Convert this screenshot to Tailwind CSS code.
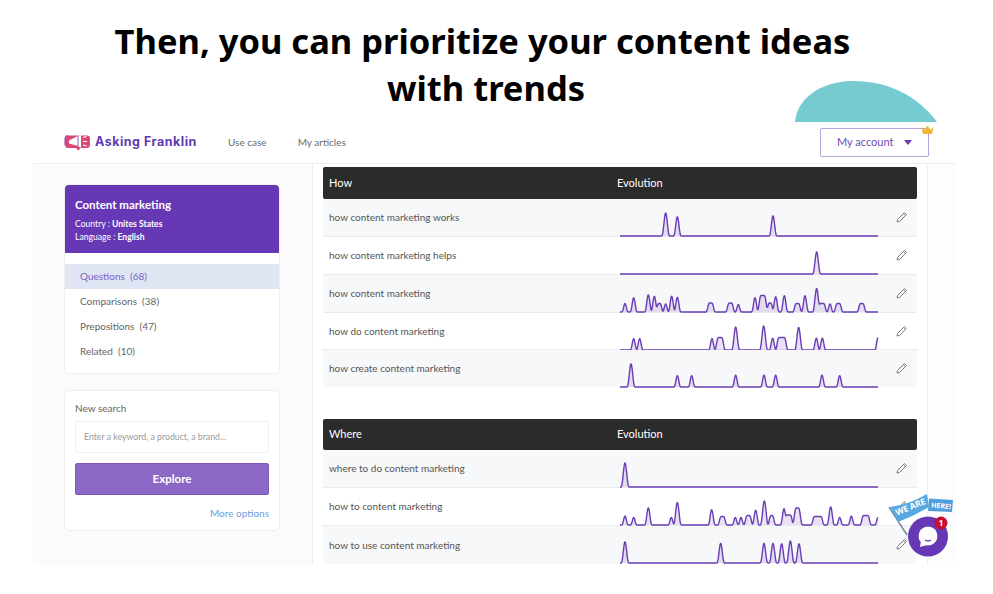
<!DOCTYPE html>
<html lang="en">
<head>
  <meta charset="UTF-8">
  <title>Asking Franklin</title>
  <script src="https://cdn.jsdelivr.net/npm/@tailwindcss/browser@4"></script>
</head>
<body class="bg-white font-['Lato',sans-serif]">
  <div class="relative w-[993px] h-[594px] overflow-hidden">
    <h1 class="w-[965px] h-[125px] pt-[17px] text-center text-[34.5px] leading-[47px] font-bold text-black font-['Noto_Sans',sans-serif]">Then, you can prioritize your content ideas<br><span class="inline-block pl-[7px]">with trends</span></h1>

    <svg class="absolute left-[795px] top-[81px]" width="142" height="41" viewBox="0 0 142 41"><path d="M0 41C2 16 28 0 58 0C92 0 122 14 142 41Z" fill="#75cbcf"/></svg>

    <div class="w-[923px] h-[440px] ml-[33px] flex flex-col">
      <header class="h-[39px] shrink-0 flex items-center border-b border-[#eeeeee] pl-[31px] relative">
        <svg width="27" height="17" viewBox="0 0 27 17" class="mb-[3px]">
          <path d="M4 1.500H23Q26 1.500 26 4.500V11Q26 14 23 14H17L14 16.500L12 14H4Q1 14 1 11V4.500Q1 1.500 4 1.500Z" fill="#dc4a74"/>
          <path d="M1 11V4.500Q1 1.500 4 1.500" stroke="#8a3fb0" stroke-width="1" fill="none"/>
          <path d="M5 6.500L14 2L17 0.500V14L14 12L5 9.500Z" fill="#fff"/>
          <path d="M14 2V12" stroke="#6a3db5" stroke-width="0.8"/>
          <path d="M19 3.500L22.500 2.500M19 7.500H23M19 11L22.500 12" stroke="#fff" stroke-width="1.200"/>
        </svg>
        <span class="ml-[4px] mb-[3px] w-[103px] text-[12.5px] font-bold tracking-[0.5px] whitespace-nowrap text-[#5f3ab0] font-['Inter',sans-serif]">Asking Franklin</span>
        <span class="ml-[30px] mb-[3px] text-[10px] text-[#6c6c6c]">Use case</span>
        <span class="ml-[31px] mb-[3px] text-[10px] text-[#6c6c6c]">My articles</span>
        <button class="absolute left-[787px] top-[3px] w-[109px] h-[29px] border border-[#b9a3dc] rounded-[2px] bg-white flex items-center text-[#6a4bb0] text-[11px] pl-[16px]">
          My account
          <svg class="ml-[11px]" width="8" height="5" viewBox="0 0 8 5"><path d="M0 0H8L4 5Z" fill="#6a3db5"/></svg>
        </button>
        <svg class="absolute left-[887px] top-0" width="15" height="10" viewBox="0 0 15 10"><path d="M1.500 2L4.500 5L7.500 0.500L10.500 5L13.500 2L12 9H3Z" fill="#f4b331"/></svg>
      </header>

      <div class="flex flex-1 min-h-0">
        <aside class="w-[280px] shrink-0 bg-[#fbfbfc] border-r border-[#eeeeee] pl-[31px] pt-[21px]">
          <div class="w-[216px] h-[190px] -mt-[1px] bg-white rounded-[5px] border border-[#efefef] overflow-hidden">
            <div class="h-[68px] bg-[#6638b5] px-[10px] pt-[11px] text-white">
              <div class="text-[11.5px] leading-[17px] font-bold">Content marketing</div>
              <div class="text-[8.6px] leading-[13px] mt-[5px]">Country : <b class="font-bold">Unites States</b></div>
              <div class="text-[8.6px] leading-[13px]">Language : <b class="font-bold">English</b></div>
            </div>
            <ul class="pt-[11px] text-[10px] text-[#666666]">
              <li class="h-[25px] leading-[25px] pl-[15px] bg-[#dfe5f2] text-[#7b5fc2]">Questions&nbsp; (68)</li>
              <li class="h-[25px] leading-[25px] pl-[15px]">Comparisons&nbsp; (38)</li>
              <li class="h-[25px] leading-[25px] pl-[15px]">Prepositions&nbsp; (47)</li>
              <li class="h-[25px] leading-[25px] pl-[15px]">Related&nbsp; (10)</li>
            </ul>
          </div>
          <div class="w-[216px] h-[141px] mt-[16px] bg-white rounded-[5px] border border-[#efefef] px-[10px] pt-[10px]">
            <div class="text-[10px] leading-[14px] text-[#666666]">New search</div>
            <div class="h-[32px] mt-[6px] border border-[#efefef] rounded-[2px] pl-[8px] flex items-center text-[8.75px] text-[#9a9a9a]">Enter a keyword, a product, a brand...</div>
            <button class="w-full h-[32px] mt-[10px] bg-[#8c68c6] border border-[#7d58ba] rounded-[2px] text-white text-[11.5px] font-bold">Explore</button>
            <div class="mt-[11px] text-right text-[10px] leading-[14px] text-[#6f9be0]">More options</div>
          </div>
        </aside>

        <main class="w-[615px] shrink-0 border-r border-[#f0f0f0] pl-[10px] pt-[3px] overflow-hidden">
          <div class="w-[594px]">
            <div class="h-[32px] bg-[#2b2b2b] rounded-[2px] flex items-center text-white text-[11px] pl-[6px]"><span class="w-[288px]">How</span><span>Evolution</span></div>
            <div data-row data-peaks="167,24 202,20 489,21" class="h-[38px] bg-[#f7f8fa] border-b border-[#ebebeb]">how content marketing works</div>
            <div data-row data-peaks="620,23" class="h-[38px] bg-white border-b border-[#ebebeb]">how content marketing helps</div>
            <div data-row data-peaks="45,9 71,15 115,18 133,16.5 148,8.5,1 167,8.5 185,16.5 202,15.5 302,9,1.5 361,9,1.5 385,8 435,15 458,16.5,2 480,9,1 497,16 523,17 562,8.5,1.5 585,17 620,24.5 636,8.5,2 660,8.5 685,8.5,1.5 755,8.5,1.5" class="h-[38px] bg-[#f7f8fa] border-b border-[#ebebeb]">how content marketing</div>
            <div data-row data-peaks="71,12 89,12 306,12 330,12.5,2 377,24 461,25 488,12.5 515,12.5,3 566,23.5 619,12.5 637,12.5 804,13" class="h-[37px] bg-white border-b border-[#ebebeb]">how do content marketing</div>
            <div data-row data-peaks="63,24 202,12 245,12 377,12.5 462,12.5 497,12.5 636,12.5 689,12" class="h-[37px] bg-[#f7f8fa]">how create content marketing</div>

            <div class="h-[31px] mt-[32px] bg-[#2b2b2b] rounded-[2px] flex items-center text-white text-[11px] pl-[6px]"><span class="w-[288px]">Where</span><span>Evolution</span></div>
            <div data-row data-peaks="45,25" class="h-[38px] bg-[#f7f8fa] border-b border-[#ebebeb]">where to do content marketing</div>
            <div data-row data-peaks="45,9.5 71,8 115,18 184,8 202,23.5 305,16 337,8.5,1.5 376,8 393,8 415,9.5,1.5 437,15.5 463,25 485,9.5,1 522,17 536,10,2 562,17,1.5 623,8.5,3.5 662,19 689,8 724,9.5 767,9.5,2.5 804,8" class="h-[38px] bg-white border-b border-[#ebebeb]">how to content marketing</div>
            <div data-row data-peaks="45,22 332,20.5 462,20.5 489,20.5 515,20 541,23 567,20" class="h-[38px] bg-[#f7f8fa]">how to use content marketing</div>
          </div>
        </main>
        <div class="flex-1 bg-[#fdfdfd]"></div>
      </div>
    </div>

    <svg class="absolute left-[886px] top-[492px]" width="72" height="68" viewBox="0 0 72 68">
      <path d="M3 15L21 43" stroke="#7d8a94" stroke-width="1.500"/>
      <path d="M43 6.500L67 8L66 20L42 19Z" fill="#4f9fdc"/>
      <path d="M4 15Q22 13 41 2L43 15Q28 24 12 30Z" fill="#58a9e3"/>
      <text x="11" y="23.500" transform="rotate(-22 11 23.500)" font-family="Noto Sans" font-size="8.500" font-weight="700" fill="#fff">WE ARE</text>
      <text x="45" y="15.500" transform="rotate(5 45 15.500)" font-family="Noto Sans" font-size="7" font-weight="700" fill="#fff">HERE!</text>
      <circle cx="42" cy="44.500" r="20" fill="#6638b5"/>
      <circle cx="42" cy="44" r="9.500" fill="#fff"/>
      <path d="M35 49L34 55L41 53Z" fill="#fff"/>
      <path d="M39 48Q42 50 45 48" stroke="#6638b5" stroke-width="1.400" fill="none"/>
      <circle cx="55" cy="31" r="6.500" fill="#c8102e"/>
      <text x="55" y="34" text-anchor="middle" font-family="Noto Sans" font-size="8" font-weight="700" fill="#fff">1</text>
    </svg>
  </div>

  <script>
    // rows come with peaks as "x,height[,plateau]" where x is measured on a 3x scale from 610
    const W = 258, BASE = 37;
    document.querySelectorAll('[data-row]').forEach(row => {
      const label = row.textContent;
      const peaks = row.dataset.peaks.split(' ').map(p => {
        const [x, top, flat] = p.split(',').map(Number);
        return { x: (x - 30) / 3, top, flat: flat || 0 };
      });
      const rawAt = x => {
        let best = 0;
        for (const p of peaks) {
          const d = Math.max(0, Math.abs(x - p.x) - p.flat);
          const half = 2.4 + p.top * 0.05;
          if (d < half) {
            const t = d / half;
            best = Math.max(best, p.top * (1 - t * t * (3 - 2 * t)));
          }
        }
        return best;
      };
      // a little smoothing so plateaus get round shoulders
      const heightAt = x => (rawAt(x - 0.5) + rawAt(x) + rawAt(x + 0.5)) / 3;
      let line = '';
      for (let x = 0; x <= W; x += 0.5) {
        line += (x ? 'L' : 'M') + x + ' ' + (BASE - heightAt(x)).toFixed(1);
      }
      row.className += ' flex items-center relative text-[10px] text-[#555555] pl-[6px]';
      row.innerHTML = '<span>' + label + '</span>' +
        '<svg class="absolute left-[297px] top-0" width="259" height="39" viewBox="0 0 259 39">' +
        '<path d="' + line + 'L' + W + ' ' + BASE + 'L0 ' + BASE + 'Z" fill="#6a3db5" fill-opacity="0.15"/>' +
        '<path d="' + line + '" fill="none" stroke="#6a3db5" stroke-width="1.4" stroke-linejoin="round"/></svg>' +
        '<svg class="absolute left-[573px] top-[12px]" width="12" height="12" viewBox="0 0 12 12" fill="none" stroke="#6e6e6e" stroke-width="0.9"><path d="M1.500 8.500L8.500 1.500L10.500 3.500L3.500 10.500L1 11Z"/><path d="M7.500 2.500L9.500 4.500"/></svg>';
    });
  </script>
</body>
</html>
